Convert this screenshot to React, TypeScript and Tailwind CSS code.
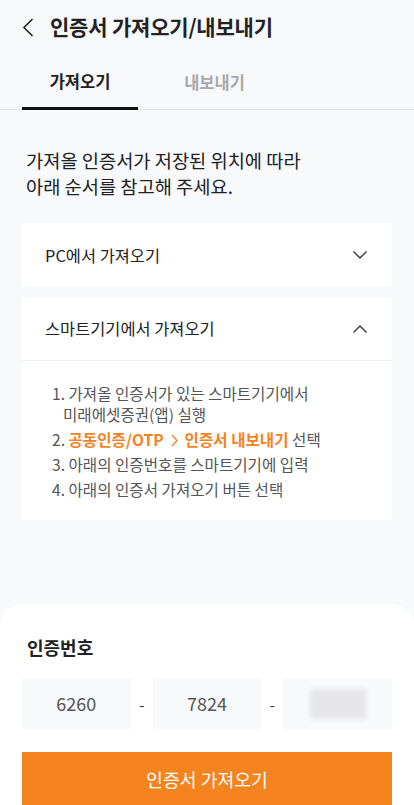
import React, { useState } from "react";

const FONT = "font-['Noto_Sans_CJK_KR','Noto_Sans',sans-serif]";

const Chevron = ({ up }: { up?: boolean }) => (
  <svg width="16" height="10" viewBox="0 0 16 10" fill="none">
    <path
      d={up ? "M1.5 8.5L8 2l6.5 6.5" : "M1.5 1.5L8 8l6.5-6.5"}
      stroke="#333"
      strokeWidth="1.4"
    />
  </svg>
);

const App = () => {
  const [openPc, setOpenPc] = useState(false);
  const [openSmart, setOpenSmart] = useState(true);

  return (
    <div className={`h-[805px] w-[414px] overflow-hidden bg-[#f8f9fb] ${FONT}`}>
      {/* Header */}
      <div className="flex h-[54px] items-center pl-[22px]">
        <svg width="12" height="19" viewBox="0 0 12 19" fill="none">
          <path d="M10.5 1L2 9.5l8.5 8.5" stroke="#222" strokeWidth="1.6" />
        </svg>
        <h1 className="ml-[16px] text-[21px] font-bold tracking-[-0.2px] text-[#222]">
          인증서 가져오기/내보내기
        </h1>
      </div>

      {/* Tabs */}
      <div className="flex h-[56px] border-b border-[#e4e5e8]">
        <div className="-mb-px ml-[22px] flex w-[116px] items-center justify-center border-b-[3px] border-[#111] pt-[2px] text-[16.5px] font-bold text-[#222]">
          가져오기
        </div>
        <div className="flex w-[153px] items-center justify-center pt-[2px] text-[16.5px] font-bold text-[#a8a8a8]">
          내보내기
        </div>
      </div>

      {/* Intro */}
      <p className="mt-[37px] px-[26px] text-[18.7px] leading-[26px] text-[#222]">
        가져올 인증서가 저장된 위치에 따라
        <br />
        아래 순서를 참고해 주세요.
      </p>

      {/* Accordion */}
      <div className="mx-[22px] mt-[24px] flex flex-col gap-[10px]">
        <div className="bg-white">
          <button
            onClick={() => setOpenPc(!openPc)}
            className="flex h-[64px] w-full items-center justify-between pl-[23px] pr-[24px] text-[16.4px] text-[#222]"
          >
            <span>PC에서 가져오기</span>
            <Chevron up={openPc} />
          </button>
        </div>

        <div className="bg-white">
          <button
            onClick={() => setOpenSmart(!openSmart)}
            className="flex h-[64px] w-full items-center justify-between border-b border-[#eeeff1] pl-[23px] pr-[24px] text-[16.4px] text-[#222]"
          >
            <span>스마트기기에서 가져오기</span>
            <Chevron up={openSmart} />
          </button>
          {openSmart && (
            <ol className="flex flex-col gap-[4px] pb-[20px] pl-[41px] pr-[10px] pt-[22px] text-[15.6px] leading-[21px] text-[#555]">
              <li className="-indent-[11px]">
                1. 가져올 인증서가 있는 스마트기기에서
                <br />
                미래에셋증권(앱) 실행
              </li>
              <li className="-indent-[11px]">
                2.{" "}
                <span className="font-bold text-[#f5821f]">
                  공동인증/OTP
                  <svg
                    className="mx-[7px] inline-block align-[-1px]"
                    width="7"
                    height="13"
                    viewBox="0 0 7 13"
                    fill="none"
                  >
                    <path d="M1 1l5 5.5L1 12" stroke="#f5821f" strokeWidth="1.3" />
                  </svg>
                  인증서 내보내기
                </span>{" "}
                선택
              </li>
              <li className="-indent-[11px]">3. 아래의 인증번호를 스마트기기에 입력</li>
              <li className="-indent-[11px]">4. 아래의 인증서 가져오기 버튼 선택</li>
            </ol>
          )}
        </div>
      </div>

      {/* Bottom sheet */}
      <div className="mt-[84px] rounded-t-[22px] bg-white px-[22px] pt-[30px]">
        <h2 className="pl-[5px] text-[18px] font-bold leading-[26px] text-[#222]">
          인증번호
        </h2>
        <div className="mt-[18px] flex items-center">
          <div className="flex h-[51px] flex-1 items-center justify-center bg-[#f8f9fb] text-[18px] text-[#555]">
            6260
          </div>
          <span className="w-[22px] text-center text-[16px] text-[#444]">-</span>
          <div className="flex h-[51px] flex-1 items-center justify-center bg-[#f8f9fb] text-[18px] text-[#555]">
            7824
          </div>
          <span className="w-[22px] text-center text-[16px] text-[#444]">-</span>
          <div className="flex h-[51px] flex-1 items-center justify-center bg-[#f8f9fb]">
            <div className="h-[30px] w-[56px] bg-[#e6e6e8] blur-[2px]" />
          </div>
        </div>
        <button className="mt-[23px] flex h-[56px] w-full items-center justify-center bg-[#f5841f] text-[18.3px] text-white">
          인증서 가져오기
        </button>
      </div>
    </div>
  );
};

export default App;
